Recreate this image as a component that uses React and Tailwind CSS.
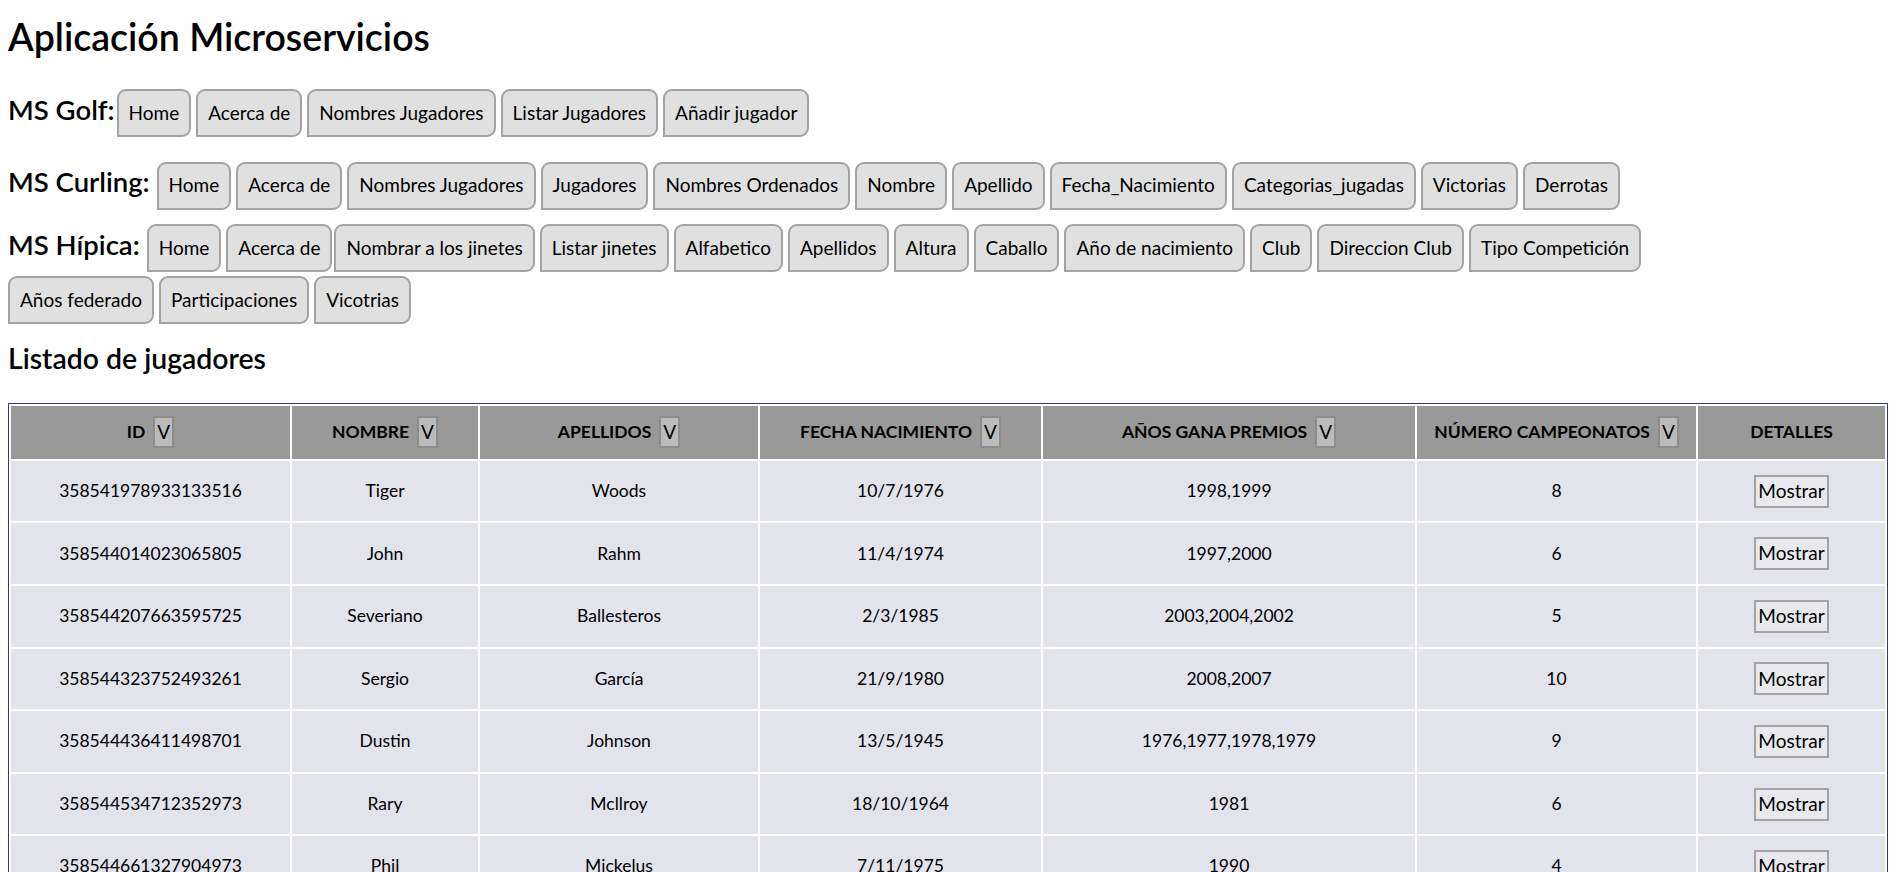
import React from "react";

const golf = ["Home", "Acerca de", "Nombres Jugadores", "Listar Jugadores", "Añadir jugador"];

const curling = [
  "Home",
  "Acerca de",
  "Nombres Jugadores",
  "Jugadores",
  "Nombres Ordenados",
  "Nombre",
  "Apellido",
  "Fecha_Nacimiento",
  "Categorias_jugadas",
  "Victorias",
  "Derrotas",
];

const hipica = [
  "Home",
  "Acerca de",
  "Nombrar a los jinetes",
  "Listar jinetes",
  "Alfabetico",
  "Apellidos",
  "Altura",
  "Caballo",
  "Año de nacimiento",
  "Club",
  "Direccion Club",
  "Tipo Competición",
];

const hipica2 = ["Años federado", "Participaciones", "Vicotrias"];

const jugadores = [
  { id: "358541978933133516", nombre: "Tiger", apellidos: "Woods", fecha: "10/7/1976", premios: "1998,1999", camp: 8 },
  { id: "358544014023065805", nombre: "John", apellidos: "Rahm", fecha: "11/4/1974", premios: "1997,2000", camp: 6 },
  { id: "358544207663595725", nombre: "Severiano", apellidos: "Ballesteros", fecha: "2/3/1985", premios: "2003,2004,2002", camp: 5 },
  { id: "358544323752493261", nombre: "Sergio", apellidos: "García", fecha: "21/9/1980", premios: "2008,2007", camp: 10 },
  { id: "358544436411498701", nombre: "Dustin", apellidos: "Johnson", fecha: "13/5/1945", premios: "1976,1977,1978,1979", camp: 9 },
  { id: "358544534712352973", nombre: "Rary", apellidos: "Mcllroy", fecha: "18/10/1964", premios: "1981", camp: 6 },
  { id: "358544661327904973", nombre: "Phil", apellidos: "Mickelus", fecha: "7/11/1975", premios: "1990", camp: 4 },
];

const columnas = [
  { label: "ID", w: "w-[279px]", sort: true },
  { label: "Nombre", w: "w-[186px]", sort: true },
  { label: "Apellidos", w: "w-[278px]", sort: true },
  { label: "Fecha Nacimiento", w: "w-[281px]", sort: true },
  { label: "Años gana premios", w: "w-[372px]", sort: true },
  { label: "Número campeonatos", w: "w-[279px]", sort: true },
  { label: "Detalles", w: "w-[187px]", sort: false },
];

const NavButton = ({ children, className = "" }) => (
  <button
    className={`h-[48px] px-[10px] border-2 border-[#a3a3a3] bg-[#e0e0e0] rounded-[9px] rounded-bl-none text-[19px] text-black ${className}`}
  >
    {children}
  </button>
);

const Label = ({ children, margin = "mr-[2px]" }) => (
  <span className={`text-[27.5px] font-semibold ${margin}`}>{children}</span>
);

export default function App() {
  return (
    <div className="min-h-screen bg-white px-2 pb-8 font-['Lato',sans-serif] text-[19.2px] text-black">
      <h1 className="mt-[14px] text-[37.5px] leading-[46px] font-semibold">
        Aplicación Microservicios
      </h1>

      <div className="mt-[29px] flex flex-wrap items-baseline gap-x-[5px] gap-y-[4px]">
        <Label margin="-mr-[3px]">MS Golf:</Label>
        {golf.map((b) => (
          <NavButton key={b}>{b}</NavButton>
        ))}
      </div>

      <div className="mt-[24px] flex flex-wrap items-baseline gap-x-[5px] gap-y-[4px]">
        <Label>MS Curling:</Label>
        {curling.map((b) => (
          <NavButton key={b}>{b}</NavButton>
        ))}
      </div>

      <div className="mt-[14px] flex flex-wrap items-baseline gap-x-[5px] gap-y-0">
        <Label>MS Hípica:</Label>
        {hipica.map((b) => (
          <NavButton key={b} className={b === "Nombrar a los jinetes" ? "-ml-[3px]" : ""}>
            {b}
          </NavButton>
        ))}
        <div className="basis-full h-0" />
        {hipica2.map((b) => (
          <NavButton key={b} className="mt-[4px]">
            {b}
          </NavButton>
        ))}
      </div>

      <h2 className="mt-[17px] text-[28.4px] leading-[34px] font-semibold">
        Listado de jugadores
      </h2>

      <table className="mt-[28px] w-full border border-[#333399] border-separate border-spacing-[2px] text-[17.5px]">
        <thead>
          <tr>
            {columnas.map((c) => (
              <th
                key={c.label}
                className={`${c.w} h-[53px] bg-[#999999] text-center font-bold uppercase`}
              >
                <div className="flex items-center justify-center gap-[8px]">
                  <span>{c.label}</span>
                  {c.sort && (
                    <span className="inline-flex h-[32px] items-center border-2 border-[#8c8c8c] bg-[#bbbbbb] px-[2px] text-[19px] font-normal">
                      V
                    </span>
                  )}
                </div>
              </th>
            ))}
          </tr>
        </thead>
        <tbody>
          {jugadores.map((j) => (
            <tr key={j.id}>
              <td className="h-[60.6px] bg-[#e3e3ec] text-center">{j.id}</td>
              <td className="h-[60.6px] bg-[#e3e3ec] text-center">{j.nombre}</td>
              <td className="h-[60.6px] bg-[#e3e3ec] text-center">{j.apellidos}</td>
              <td className="h-[60.6px] bg-[#e3e3ec] text-center">{j.fecha}</td>
              <td className="h-[60.6px] bg-[#e3e3ec] text-center">{j.premios}</td>
              <td className="h-[60.6px] bg-[#e3e3ec] text-center">{j.camp}</td>
              <td className="h-[60.6px] bg-[#e3e3ec] text-center">
                <button className="h-[33px] px-[2px] border-2 border-[#a3a3a3] bg-[#e9e9ed] text-[19px]">
                  Mostrar
                </button>
              </td>
            </tr>
          ))}
        </tbody>
      </table>
    </div>
  );
}
